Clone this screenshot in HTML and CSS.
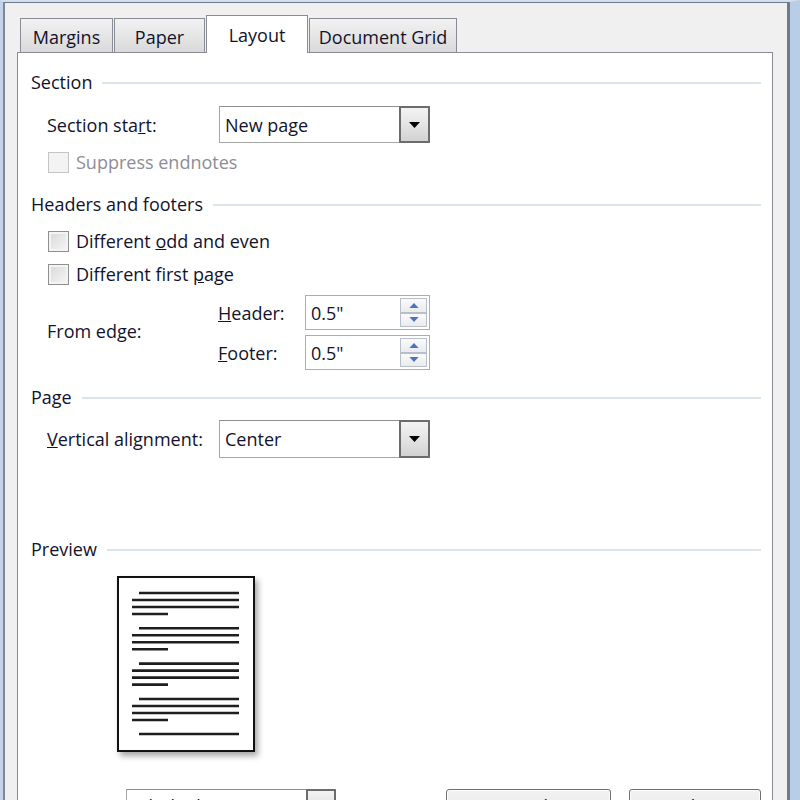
FILE: index.html
```html
<!DOCTYPE html>
<html>
<head>
<meta charset="utf-8">
<link rel="stylesheet" href="styles.css">
</head>
<body>
<div class="window">
  <div class="dialog">
    <div class="tabs">
      <div class="tab t-margins">Margins</div>
      <div class="tab t-paper">Paper</div>
      <div class="tab active t-layout">Layout</div>
      <div class="tab t-grid">Document Grid</div>
    </div>
    <div class="panel">
      <div class="group-head g-section"><span>Section</span><i class="rule"></i></div>

      <div class="row r-start">
        <span class="lbl">Section sta<u>r</u>t:</span>
        <div class="combo">
          <span class="val">New page</span>
          <span class="drop"><svg width="11" height="6" viewBox="0 0 11 6"><path d="M0 0H11L5.5 6Z" fill="#000"/></svg></span>
        </div>
      </div>

      <div class="check-row r-suppress disabled">
        <span class="box"></span><span class="ctext">Suppress endnotes</span>
      </div>

      <div class="group-head g-headers"><span>Headers and footers</span><i class="rule"></i></div>

      <div class="check-row r-odd">
        <span class="box"></span><span class="ctext">Different <u>o</u>dd and even</span>
      </div>
      <div class="check-row r-first">
        <span class="box"></span><span class="ctext">Different first <u>p</u>age</span>
      </div>

      <div class="edge">
        <span class="lbl edge-lbl">From edge:</span>
        <div class="edge-fields">
          <div class="spin-row">
            <span class="slbl"><u>H</u>eader:</span>
            <div class="spin">
              <span class="val">0.5"</span>
              <span class="arrows">
                <span class="sb"><svg width="11" height="6" viewBox="0 0 11 6"><path d="M5.5 0L11 6H0Z" fill="#4d72c2"/></svg></span>
                <span class="sb"><svg width="11" height="6" viewBox="0 0 11 6"><path d="M0 0H11L5.5 6Z" fill="#4d72c2"/></svg></span>
              </span>
            </div>
          </div>
          <div class="spin-row">
            <span class="slbl"><u>F</u>ooter:</span>
            <div class="spin">
              <span class="val">0.5"</span>
              <span class="arrows">
                <span class="sb"><svg width="11" height="6" viewBox="0 0 11 6"><path d="M5.5 0L11 6H0Z" fill="#4d72c2"/></svg></span>
                <span class="sb"><svg width="11" height="6" viewBox="0 0 11 6"><path d="M0 0H11L5.5 6Z" fill="#4d72c2"/></svg></span>
              </span>
            </div>
          </div>
        </div>
      </div>

      <div class="group-head g-page"><span>Page</span><i class="rule"></i></div>

      <div class="row r-valign">
        <span class="lbl"><u>V</u>ertical alignment:</span>
        <div class="combo">
          <span class="val">Center</span>
          <span class="drop"><svg width="11" height="6" viewBox="0 0 11 6"><path d="M0 0H11L5.5 6Z" fill="#000"/></svg></span>
        </div>
      </div>

      <div class="group-head g-preview"><span>Preview</span><i class="rule"></i></div>

      <div class="preview">
        <svg width="134" height="172" viewBox="0 0 134 172">
          <g stroke="#1e1e1e" stroke-width="2.6">
            <path d="M20 15H120M13 22H120M13 29H120M13 36H49"/>
            <path d="M20 50.3H120M13 57.3H120M13 64.3H120M13 71.3H49"/>
            <path d="M20 85.6H120M13 92.6H120M13 99.6H120M13 106.6H49"/>
            <path d="M20 121H120M13 128H120M13 135H120M13 142H49"/>
            <path d="M20 156H120"/>
          </g>
        </svg>
      </div>

      <div class="bottom">
        <span class="lbl apply">Apply to:</span>
        <div class="combo small">
          <span class="val">Whole document</span>
          <span class="drop"></span>
        </div>
        <div class="btn b-line">Line Numbers...</div>
        <div class="btn b-borders">Borders...</div>
      </div>
    </div>
  </div>
</div>
</body>
</html>
```

FILE: styles.css
```css
html, body {
  margin: 0;
  padding: 0;
}
body {
  width: 800px;
  height: 800px;
  overflow: hidden;
  background: #b9cde6;
  font-family: "Open Sans", "Noto Sans", sans-serif;
  font-size: 18px;
  color: #12122c;
}
.window {
  box-sizing: border-box;
  width: 800px;
  height: 800px;
  border-top: 2px solid #d3dfee;
  border-left: 3px solid #c2d3ea;
  border-right: 10px solid #b9cde6;
}
.dialog {
  box-sizing: border-box;
  height: 900px;
  background: #f0f0f0;
  border-top: 1px solid #6f7b8b;
  border-left: 2px solid #7d8896;
  border-right: 3px solid #6f7b8b;
  padding-top: 12px;
}
.tabs {
  display: flex;
  align-items: flex-end;
  gap: 1px;
  height: 37px;
  margin-left: 15px;
  position: relative;
  z-index: 2;
}
.tab {
  box-sizing: border-box;
  height: 34px;
  border: 1px solid #898c95;
  border-bottom: none;
  background: linear-gradient(#f2f2f2, #e6e6e6 50%, #d9d9d9);
  display: flex;
  align-items: center;
  justify-content: center;
  padding-top: 2px;
  white-space: nowrap;
}
.t-margins { width: 93px; }
.t-paper { width: 91px; }
.t-layout { width: 102px; }
.t-grid { width: 148px; }
.tab.active {
  height: 38px;
  margin-bottom: -1px;
  background: #fff;
  padding-top: 0;
}
.panel {
  box-sizing: border-box;
  width: 756px;
  height: 900px;
  margin-left: 12px;
  background: #fff;
  border: 1px solid #898c95;
  padding: 14px 11px 0 13px;
  position: relative;
  z-index: 1;
}
.group-head {
  display: flex;
  align-items: center;
  height: 30px;
}
.group-head span { white-space: nowrap; }
.rule {
  flex: 1;
  height: 2px;
  background: #dce4eb;
  margin-left: 10px;
  margin-top: 1px;
}
.g-headers { margin-top: 15px; }
.g-page { margin-top: 12px; }
.g-preview { margin-top: 76px; }

.row {
  display: flex;
  align-items: center;
  padding-left: 16px;
}
.r-start { margin-top: 9px; }
.r-valign { margin-top: 8px; }
.lbl {
  width: 172px;
  flex: none;
  white-space: nowrap;
}
.combo {
  box-sizing: border-box;
  width: 211px;
  height: 37px;
  border: 1px solid #a6a6a6;
  border-top-color: #8e8e8e;
  display: flex;
  align-items: stretch;
  background: #fff;
}
.r-valign .combo { height: 38px; }
.combo .val {
  flex: 1;
  display: flex;
  align-items: center;
  padding-left: 5px;
  white-space: nowrap;
}
.drop {
  box-sizing: border-box;
  width: 31px;
  border: 2px solid #6c6c6c;
  border-radius: 1px;
  background: linear-gradient(#f3f3f3, #e4e4e4 50%, #d2d2d2);
  display: flex;
  align-items: center;
  justify-content: center;
  margin: -1px -1px -1px 0;
}

.check-row {
  display: flex;
  align-items: center;
  padding-left: 17px;
}
.r-suppress { margin-top: 7px; height: 24px; }
.r-odd { margin-top: 9px; height: 26px; }
.r-first { margin-top: 7px; height: 26px; }
.box {
  box-sizing: border-box;
  width: 21px;
  height: 21px;
  border: 1px solid #8e8f8f;
  background: linear-gradient(135deg, #d8d8d8, #f7f7f7);
  box-shadow: inset 0 0 0 2px #f4f4f4;
  flex: none;
}
.ctext {
  margin-left: 7px;
  white-space: nowrap;
}
.disabled .box {
  border-color: #c5c5c5;
  background: #f3f3f3;
  box-shadow: none;
}
.disabled .ctext { color: #8c8d96; }

.edge {
  display: flex;
  align-items: center;
  padding-left: 16px;
  margin-top: 8px;
}
.edge-lbl { width: 171px; padding-bottom: 4px; }
.edge-fields {
  display: flex;
  flex-direction: column;
  gap: 5px;
}
.spin-row {
  display: flex;
  align-items: center;
  height: 35px;
}
.slbl {
  width: 87px;
  white-space: nowrap;
}
.spin {
  box-sizing: border-box;
  width: 125px;
  height: 35px;
  border: 1px solid #abadb3;
  display: flex;
  align-items: center;
  padding-right: 2px;
}
.spin .val {
  flex: 1;
  padding-left: 5px;
}
.arrows {
  display: flex;
  flex-direction: column;
  width: 27px;
}
.sb {
  box-sizing: border-box;
  height: 14.5px;
  border: 1px solid #b9bfc9;
  background: linear-gradient(#fafafa, #e9ebee);
  display: flex;
  align-items: center;
  justify-content: center;
}
.sb svg { width: 10px; height: 5px; }

.preview {
  box-sizing: border-box;
  width: 138px;
  height: 176px;
  margin-top: 12px;
  margin-left: 86px;
  border: 2px solid #111;
  background: #fff;
  box-shadow: 3px 4px 6px rgba(0, 0, 0, 0.35);
}
.preview svg { display: block; }

.bottom {
  display: flex;
  align-items: flex-start;
  margin-top: 37px;
  padding-left: 16px;
}
.apply {
  width: 79px;
  padding-top: 7px;
}
.combo.small {
  width: 210px;
  height: 34px;
}
.combo.small .drop { width: 30px; }
.btn {
  box-sizing: border-box;
  height: 34px;
  border: 1px solid #707070;
  border-radius: 3px;
  background: linear-gradient(#f2f2f2, #ebebeb 50%, #dddddd);
  box-shadow: inset 0 0 0 1px #fcfcfc;
  display: flex;
  align-items: center;
  justify-content: center;
  white-space: nowrap;
}
.b-line { width: 165px; margin-left: 110px; }
.b-borders { width: 132px; margin-left: 18px; }
```
